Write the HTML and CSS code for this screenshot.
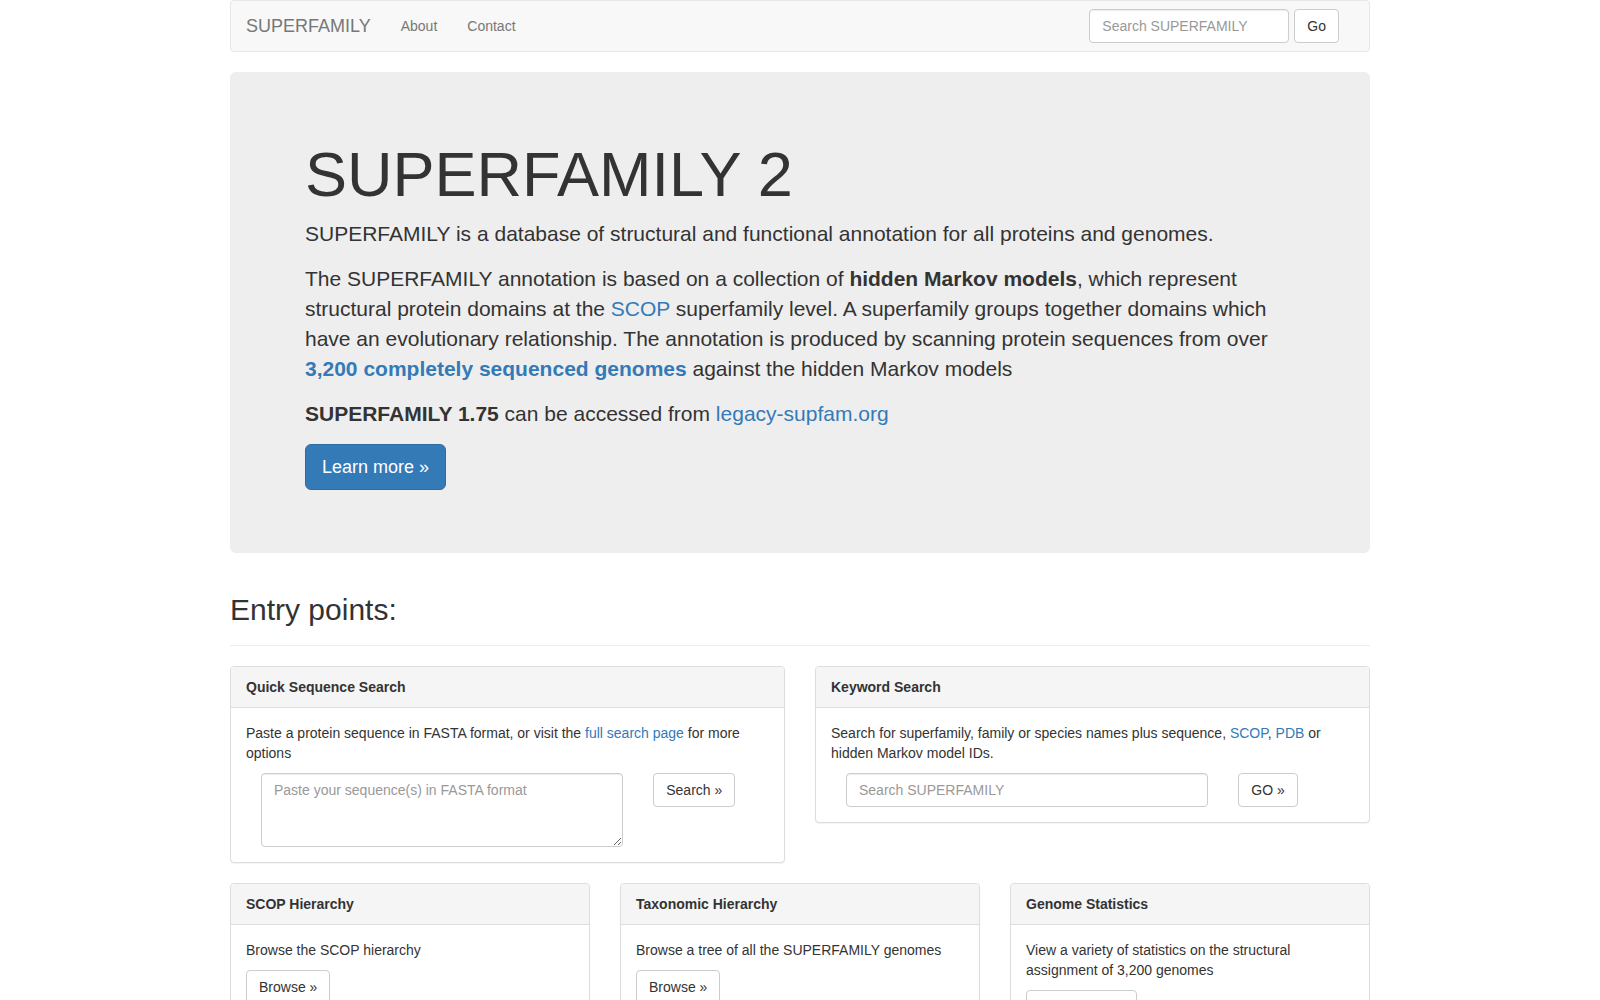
FILE: index.html
```html
<!DOCTYPE html>
<html lang="en">
<head>
<meta charset="utf-8">
<title>SUPERFAMILY 2</title>
<link rel="stylesheet" href="styles.css">
</head>
<body>
<div class="container">
  <nav class="navbar">
    <a class="navbar-brand" href="#">SUPERFAMILY</a>
    <ul class="nav">
      <li><a href="#">About</a></li>
      <li><a href="#">Contact</a></li>
    </ul>
    <form class="navbar-form">
      <input class="form-control nav-search" type="text" placeholder="Search SUPERFAMILY">
      <button class="btn btn-default" type="button">Go</button>
    </form>
  </nav>

  <div class="jumbotron">
    <h1>SUPERFAMILY 2</h1>
    <p>SUPERFAMILY is a database of structural and functional annotation for all proteins and genomes.</p>
    <p>The SUPERFAMILY annotation is based on a collection of <b>hidden Markov models</b>, which represent structural protein domains at the <a href="#">SCOP</a> superfamily level. A superfamily groups together domains which have an evolutionary relationship. The annotation is produced by scanning protein sequences from over <a href="#"><b>3,200 completely sequenced genomes</b></a> against the hidden Markov models</p>
    <p><b>SUPERFAMILY 1.75</b> can be accessed from <a href="#">legacy-supfam.org</a></p>
    <div class="jumbo-actions">
      <a class="btn btn-primary btn-lg" href="#">Learn more &raquo;</a>
    </div>
  </div>

  <div class="page-header">
    <h2>Entry points:</h2>
  </div>

  <div class="row row-2">
    <div class="panel">
      <div class="panel-heading">Quick Sequence Search</div>
      <div class="panel-body">
        <p>Paste a protein sequence in FASTA format, or visit the <a href="#">full search page</a> for more options</p>
        <form class="form-row">
          <div class="col-9">
            <textarea class="form-control seq-input" rows="3" placeholder="Paste your sequence(s) in FASTA format"></textarea>
          </div>
          <div class="col-3">
            <button class="btn btn-default" type="button">Search &raquo;</button>
          </div>
        </form>
      </div>
    </div>
    <div class="panel">
      <div class="panel-heading">Keyword Search</div>
      <div class="panel-body">
        <p>Search for superfamily, family or species names plus sequence, <a href="#">SCOP</a>, <a href="#">PDB</a> or hidden Markov model IDs.</p>
        <form class="form-row">
          <div class="col-9">
            <input class="form-control" type="text" placeholder="Search SUPERFAMILY">
          </div>
          <div class="col-3">
            <button class="btn btn-default" type="button">GO &raquo;</button>
          </div>
        </form>
      </div>
    </div>
  </div>

  <div class="row row-3">
    <div class="panel">
      <div class="panel-heading">SCOP Hierarchy</div>
      <div class="panel-body">
        <p>Browse the SCOP hierarchy</p>
        <a class="btn btn-default" href="#">Browse &raquo;</a>
      </div>
    </div>
    <div class="panel">
      <div class="panel-heading">Taxonomic Hierarchy</div>
      <div class="panel-body">
        <p>Browse a tree of all the SUPERFAMILY genomes</p>
        <a class="btn btn-default" href="#">Browse &raquo;</a>
      </div>
    </div>
    <div class="panel">
      <div class="panel-heading">Genome Statistics</div>
      <div class="panel-body">
        <p>View a variety of statistics on the structural assignment of 3,200 genomes</p>
        <a class="btn btn-default btn-stats" href="#">Statistics &raquo;</a>
      </div>
    </div>
  </div>
</div>
</body>
</html>
```

FILE: styles.css
```css
* {
  box-sizing: border-box;
}

html, body {
  margin: 0;
  padding: 0;
  background: #fff;
}

body {
  font-family: "Liberation Sans", Arial, Helvetica, sans-serif;
  font-size: 14px;
  line-height: 1.42857143;
  color: #333;
}

a {
  color: #337ab7;
  text-decoration: none;
}

p {
  margin: 0 0 10px;
}

.container {
  width: 1140px;
  margin: 0 auto;
}

/* Navbar */
.navbar {
  display: flex;
  align-items: center;
  min-height: 50px;
  margin-bottom: 20px;
  padding: 0 15px;
  background: #f8f8f8;
  border: 1px solid #e7e7e7;
  border-radius: 4px;
}

.navbar-brand {
  display: block;
  height: 50px;
  padding: 15px;
  margin-left: -15px;
  font-size: 18px;
  line-height: 20px;
  color: #777;
}

.nav {
  display: flex;
  list-style: none;
  margin: 0;
  padding: 0;
}

.nav a {
  display: block;
  padding: 15px;
  line-height: 20px;
  color: #777;
}

.navbar-form {
  display: flex;
  align-items: center;
  gap: 5px;
  margin: 8px 15px 8px auto;
}

.form-control.nav-search {
  flex: 0 0 auto;
  width: 200px;
}

/* Form controls */
.form-control {
  display: block;
  width: 100%;
  height: 34px;
  padding: 6px 12px;
  font-family: inherit;
  font-size: 14px;
  line-height: 1.42857143;
  color: #555;
  background: #fff;
  border: 1px solid #ccc;
  border-radius: 4px;
  box-shadow: inset 0 1px 1px rgba(0, 0, 0, .075);
}

.form-control::placeholder {
  color: #999;
  opacity: 1;
}

.seq-input {
  height: 74px;
}

/* Buttons */
.btn {
  display: inline-block;
  padding: 6px 12px;
  font-family: inherit;
  font-size: 14px;
  line-height: 1.42857143;
  text-align: center;
  white-space: nowrap;
  border: 1px solid transparent;
  border-radius: 4px;
  cursor: pointer;
}

.btn-default {
  color: #333;
  background: #fff;
  border-color: #ccc;
}

.btn-primary {
  color: #fff;
  background: #337ab7;
  border-color: #2e6da4;
}

.btn-lg {
  padding: 10px 16px;
  font-size: 18px;
  line-height: 1.3333333;
  border-radius: 6px;
}

.btn-stats {
  width: 111px;
}

/* Jumbotron */
.jumbotron {
  padding: 48px 75px;
  margin-bottom: 30px;
  background: #eee;
  border-radius: 6px;
}

.jumbotron h1 {
  margin: 20px 0 10px;
  font-size: 63px;
  font-weight: 500;
  line-height: 1.1;
  color: inherit;
}

.jumbotron p {
  margin: 0 0 15px;
  font-size: 21px;
  line-height: 30px;
}

.jumbo-actions {
  display: flex;
  margin-bottom: 15px;
}

/* Page header */
.page-header {
  margin: 40px 0 20px;
  padding-bottom: 9px;
  border-bottom: 1px solid #eee;
}

.page-header h2 {
  margin: 0 0 10px;
  font-size: 30px;
  font-weight: 500;
  line-height: 1.1;
}

/* Rows */
.row {
  display: grid;
  column-gap: 30px;
  align-items: start;
}

.row-2 {
  grid-template-columns: repeat(2, 1fr);
}

.row-3 {
  grid-template-columns: repeat(3, 1fr);
}

/* Panels */
.panel {
  margin-bottom: 20px;
  background: #fff;
  border: 1px solid #ddd;
  border-radius: 4px;
  box-shadow: 0 1px 1px rgba(0, 0, 0, .05);
}

.panel-heading {
  padding: 10px 15px;
  font-weight: bold;
  color: #333;
  background: #f5f5f5;
  border-bottom: 1px solid #ddd;
  border-radius: 3px 3px 0 0;
}

.panel-body {
  padding: 15px;
}

.form-row {
  display: flex;
  margin: 0;
}

.col-9 {
  flex: 0 0 75%;
  padding: 0 15px;
}

.col-3 {
  flex: 0 0 25%;
  padding: 0 15px;
}
```
